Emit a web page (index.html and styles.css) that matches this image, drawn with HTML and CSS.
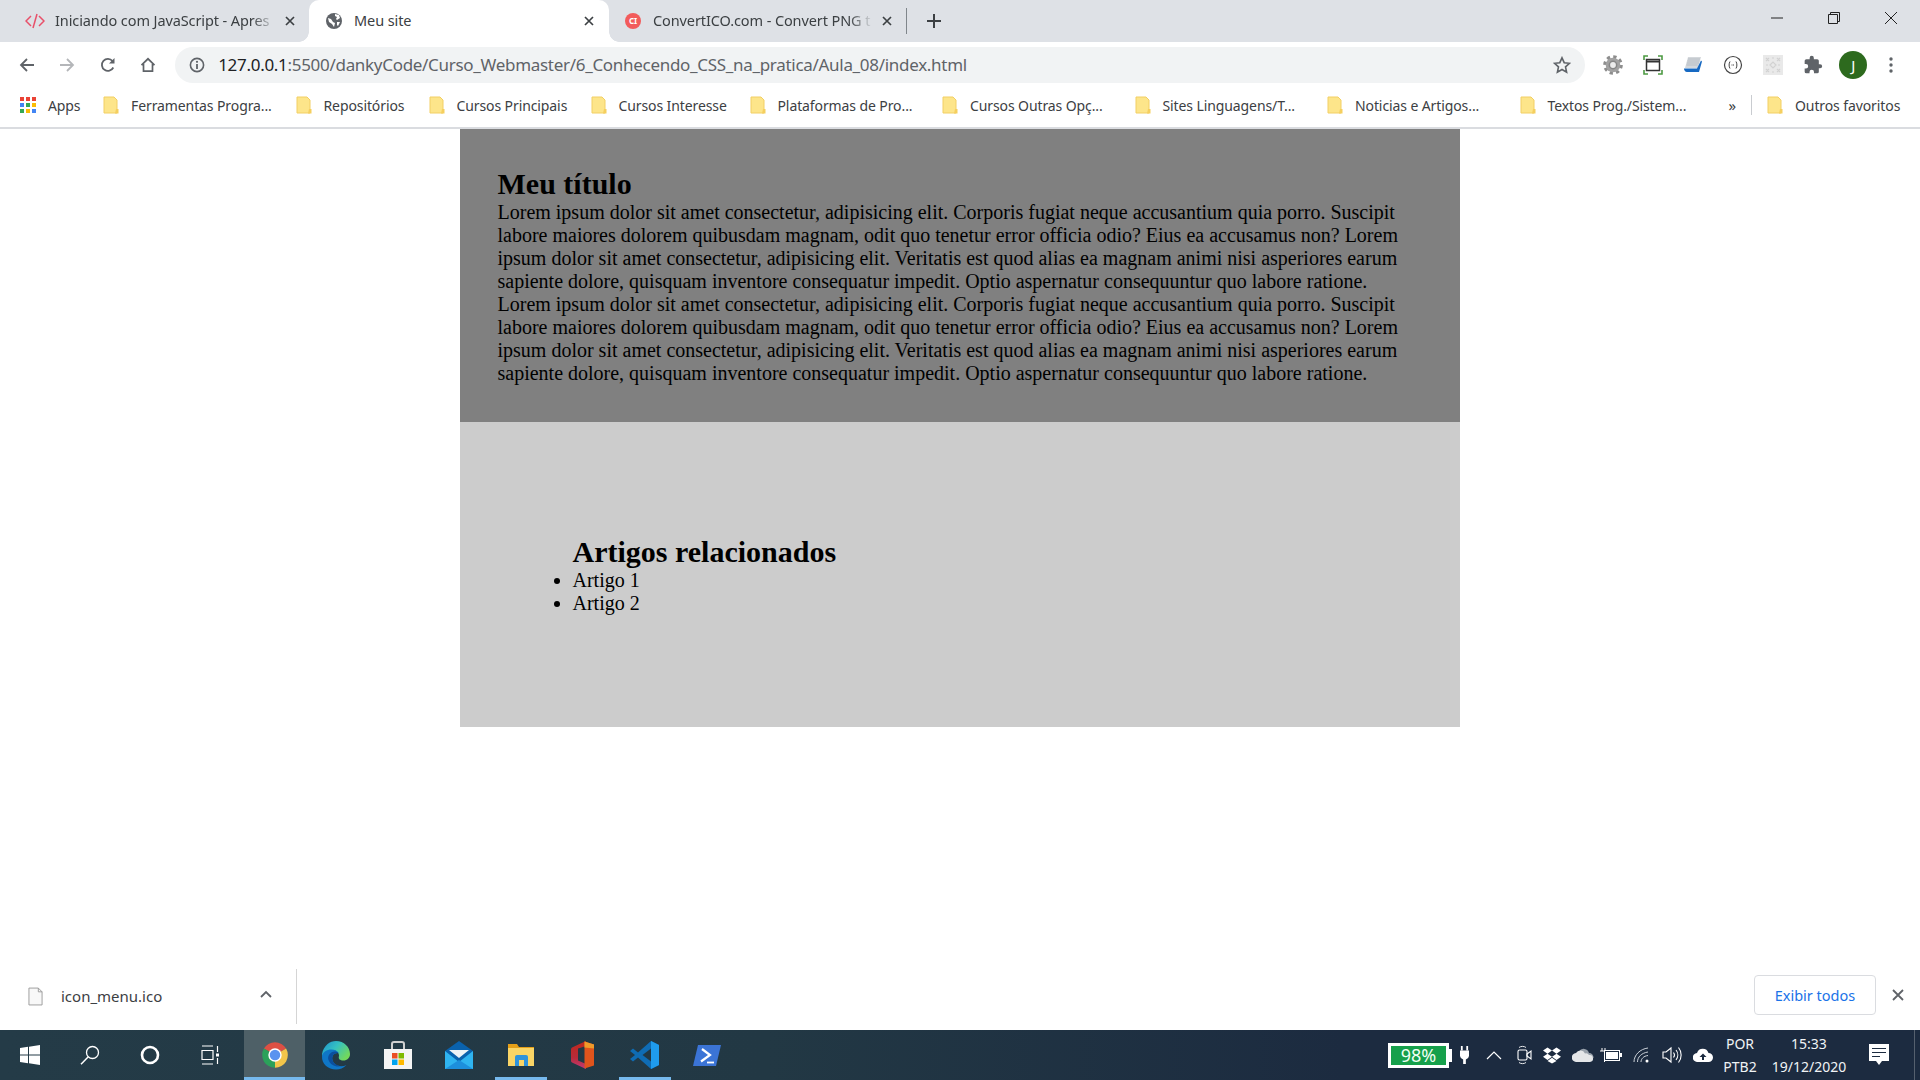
FILE: index.html
```html
<!DOCTYPE html>
<html lang="pt-BR">
<head>
<meta charset="utf-8">
<title>Meu site</title>
<link rel="stylesheet" href="styles.css">
</head>
<body>
<div class="tabstrip">
  <div class="tab tab-first">
    <svg class="fav" viewBox="0 0 20 16"><path d="M6 3 1 8l5 5M14 3l5 5-5 5" fill="none" stroke="#e8506a" stroke-width="1.5"/><path d="M12 1 8 15" fill="none" stroke="#e8506a" stroke-width="1.5"/></svg>
    <span class="tab-title">Iniciando com JavaScript - Apres</span>
    <svg class="tab-x" viewBox="0 0 10 10"><path d="M1 1l8 8M9 1l-8 8" stroke="#3c4043" stroke-width="1.7"/></svg>
  </div>
  <div class="tab tab-active">
    <svg class="fav" viewBox="0 0 16 16"><circle cx="8" cy="8" r="8" fill="#5f6368"/><path d="M2 5l3 1 2 3 2 1-1 4-2-3-3-2zM9 1l4 1 1 3-3 2-1-1 1-2-2-1zM11 9l3 0-2 4-1-1z" fill="#fff"/></svg>
    <span class="tab-title">Meu site</span>
    <svg class="tab-x" viewBox="0 0 10 10"><path d="M1 1l8 8M9 1l-8 8" stroke="#3c4043" stroke-width="1.7"/></svg>
  </div>
  <div class="tab tab-third">
    <span class="fav-ci">CI</span>
    <span class="tab-title">ConvertICO.com - Convert PNG t</span>
    <svg class="tab-x" viewBox="0 0 10 10"><path d="M1 1l8 8M9 1l-8 8" stroke="#3c4043" stroke-width="1.7"/></svg>
  </div>
  <div class="tab-sep"></div>
  <svg class="new-tab" viewBox="0 0 14 14"><path d="M7 0v14M0 7h14" stroke="#3c4043" stroke-width="2"/></svg>
  <div class="win-controls">
    <svg class="win-btn" viewBox="0 0 14 14"><path d="M1 7h12" stroke="#222" stroke-width="1"/></svg>
    <svg class="win-btn" viewBox="0 0 14 14"><path d="M1.500 3.500h9v9h-9zM3.500 3.500v-2h9v9h-2" fill="none" stroke="#222" stroke-width="1"/></svg>
    <svg class="win-btn" viewBox="0 0 14 14"><path d="M1 1l12 12M13 1L1 13" stroke="#222" stroke-width="1"/></svg>
  </div>
</div>

<div class="toolbar">
  <div class="nav-btn"><svg viewBox="0 0 16 16"><path d="M15 8H2M8 2 2 8l6 6" fill="none" stroke="#5f6368" stroke-width="1.800"/></svg></div>
  <div class="nav-btn"><svg viewBox="0 0 16 16"><path d="M1 8h13M8 2l6 6-6 6" fill="none" stroke="#b4b6b9" stroke-width="1.800"/></svg></div>
  <div class="nav-btn"><svg viewBox="0 0 16 16"><path d="M13.300 10.500A6 6 0 1 1 12.500 4" fill="none" stroke="#5f6368" stroke-width="1.800"/><path d="M14.500 1v5.500H9z" fill="#5f6368"/></svg></div>
  <div class="nav-btn"><svg viewBox="0 0 16 16"><path d="M1.500 8.200 8 1.800l6.500 6.400M3.500 7v7.200h9V7" fill="none" stroke="#5f6368" stroke-width="1.700"/></svg></div>
  <div class="omnibox">
    <svg class="info" viewBox="0 0 16 16"><circle cx="8" cy="8" r="6.600" fill="none" stroke="#5f6368" stroke-width="1.600"/><path d="M8 7v5" stroke="#5f6368" stroke-width="1.800"/><circle cx="8" cy="4.800" r="1.100" fill="#5f6368"/></svg>
    <span class="url"><span class="url-host">127.0.0.1</span>:5500/dankyCode/Curso_Webmaster/6_Conhecendo_CSS_na_pratica/Aula_08/index.html</span>
    <svg class="star" viewBox="0 0 18 18"><path d="M9 1.800l2.200 4.900 5.300.6-4 3.600 1.100 5.300L9 13.500l-4.600 2.700 1.100-5.300-4-3.600 5.300-.6z" fill="none" stroke="#5f6368" stroke-width="1.600"/></svg>
  </div>
  <div class="ext-row">
    <svg class="ext" viewBox="0 0 20 20"><circle cx="10" cy="10" r="8" fill="none" stroke="#8d8d8d" stroke-width="3.600" stroke-dasharray="3.200 3.080"/><circle cx="10" cy="10" r="7.300" fill="#a2a2a2"/><circle cx="10" cy="10" r="4.400" fill="#868686"/><circle cx="10" cy="10" r="2.900" fill="#ececec"/></svg>
    <svg class="ext" viewBox="0 0 20 20"><path d="M1 5V1h4M15 1h4v4M19 15v4h-4M5 19H1v-4" fill="none" stroke="#4d9a43" stroke-width="1.600"/><rect x="3.500" y="4.500" width="13" height="11" fill="none" stroke="#333" stroke-width="1.500"/><path d="M3.500 6.500h13" stroke="#333" stroke-width="2"/></svg>
    <svg class="ext" viewBox="0 0 20 20"><path d="M5 2h13l-3 11H2z" fill="#d4d8dc"/><path d="M5 4h12M4.500 6h12M4 8h12M3.500 10h11" stroke="#aeb4bb" stroke-width=".7"/><path d="M1 13.500h13l4-8 1 1-3 10.500H4c-2 0-3-2-3-3.500z" fill="#1769c2"/></svg>
    <svg class="ext" viewBox="0 0 20 20"><circle cx="10" cy="10" r="8.500" fill="#fff" stroke="#444" stroke-width="1.200"/><path d="M7 6.500C5.800 8.500 5.800 11.500 7 13.500M13 6.500c1.200 2 1.200 5 0 7" fill="none" stroke="#444" stroke-width="1"/><path d="M8.500 10h3" stroke="#444" stroke-width="1" stroke-dasharray="1 .5"/></svg>
    <svg class="ext" viewBox="0 0 20 20"><rect width="20" height="20" fill="#e9e9e9"/><path d="M3 3l3 3M6 3 3 6M14 3l3 3M17 3l-3 3M3 14l3 3M6 14l-3 3M14 14l3 3M17 14l-3 3M7 10l3-3 3 3-3 3zM3 10h2M15 10h2M9 3h2M9 17h2" fill="none" stroke="#d2d2d2" stroke-width="1.200"/></svg>
    <svg class="ext" viewBox="0 0 24 24"><path d="M20.500 11H19V7a2 2 0 0 0-2-2h-4V3.500a2.500 2.500 0 0 0-5 0V5H4a2 2 0 0 0-2 2v3.800h1.500a2.700 2.700 0 0 1 0 5.400H2V20a2 2 0 0 0 2 2h3.800v-1.500a2.700 2.700 0 0 1 5.400 0V22H17a2 2 0 0 0 2-2v-4h1.500a2.500 2.500 0 0 0 0-5z" fill="#5f6368"/></svg>
    <span class="avatar">J</span>
    <svg class="ext dots" viewBox="0 0 4 16"><circle cx="2" cy="2" r="1.700" fill="#5f6368"/><circle cx="2" cy="8" r="1.700" fill="#5f6368"/><circle cx="2" cy="14" r="1.700" fill="#5f6368"/></svg>
  </div>
</div>

<div class="bookmarks">
  <div class="bm bm-apps">
    <svg class="apps" viewBox="0 0 16 16"><rect x="0" y="0" width="4" height="4" fill="#ea4335"/><rect x="6" y="0" width="4" height="4" fill="#ea4335"/><rect x="12" y="0" width="4" height="4" fill="#ea4335"/><rect x="0" y="6" width="4" height="4" fill="#4285f4"/><rect x="6" y="6" width="4" height="4" fill="#34a853"/><rect x="12" y="6" width="4" height="4" fill="#fbbc04"/><rect x="0" y="12" width="4" height="4" fill="#34a853"/><rect x="6" y="12" width="4" height="4" fill="#fbbc04"/><rect x="12" y="12" width="4" height="4" fill="#4285f4"/></svg>
    <span>Apps</span>
  </div>
  <div class="bm bm-a"><svg class="folder" viewBox="0 0 16 18"><path d="M1 1h10l3 3v13H1z" fill="#fde58a" stroke="#f2cf64"/><path d="M13 13h2.500v4.500H12z" fill="#f5cf5f"/></svg><span>Ferramentas Progra...</span></div>
  <div class="bm bm-b"><svg class="folder" viewBox="0 0 16 18"><path d="M1 1h10l3 3v13H1z" fill="#fde58a" stroke="#f2cf64"/><path d="M13 13h2.500v4.500H12z" fill="#f5cf5f"/></svg><span>Repositórios</span></div>
  <div class="bm bm-c"><svg class="folder" viewBox="0 0 16 18"><path d="M1 1h10l3 3v13H1z" fill="#fde58a" stroke="#f2cf64"/><path d="M13 13h2.500v4.500H12z" fill="#f5cf5f"/></svg><span>Cursos Principais</span></div>
  <div class="bm bm-d"><svg class="folder" viewBox="0 0 16 18"><path d="M1 1h10l3 3v13H1z" fill="#fde58a" stroke="#f2cf64"/><path d="M13 13h2.500v4.500H12z" fill="#f5cf5f"/></svg><span>Cursos Interesse</span></div>
  <div class="bm bm-a"><svg class="folder" viewBox="0 0 16 18"><path d="M1 1h10l3 3v13H1z" fill="#fde58a" stroke="#f2cf64"/><path d="M13 13h2.500v4.500H12z" fill="#f5cf5f"/></svg><span>Plataformas de Pro...</span></div>
  <div class="bm bm-a"><svg class="folder" viewBox="0 0 16 18"><path d="M1 1h10l3 3v13H1z" fill="#fde58a" stroke="#f2cf64"/><path d="M13 13h2.500v4.500H12z" fill="#f5cf5f"/></svg><span>Cursos Outras Opç...</span></div>
  <div class="bm bm-a"><svg class="folder" viewBox="0 0 16 18"><path d="M1 1h10l3 3v13H1z" fill="#fde58a" stroke="#f2cf64"/><path d="M13 13h2.500v4.500H12z" fill="#f5cf5f"/></svg><span>Sites Linguagens/T...</span></div>
  <div class="bm bm-a"><svg class="folder" viewBox="0 0 16 18"><path d="M1 1h10l3 3v13H1z" fill="#fde58a" stroke="#f2cf64"/><path d="M13 13h2.500v4.500H12z" fill="#f5cf5f"/></svg><span>Noticias e Artigos...</span></div>
  <div class="bm bm-e"><svg class="folder" viewBox="0 0 16 18"><path d="M1 1h10l3 3v13H1z" fill="#fde58a" stroke="#f2cf64"/><path d="M13 13h2.500v4.500H12z" fill="#f5cf5f"/></svg><span>Textos Prog./Sistem...</span></div>
  <span class="bm-more">»</span>
  <div class="bm-sep"></div>
  <div class="bm"><svg class="folder" viewBox="0 0 16 18"><path d="M1 1h10l3 3v13H1z" fill="#fde58a" stroke="#f2cf64"/><path d="M13 13h2.500v4.500H12z" fill="#f5cf5f"/></svg><span>Outros favoritos</span></div>
</div>

<main class="viewport">
  <div class="site">
    <section class="content">
      <h2>Meu título</h2>
      <p>Lorem ipsum dolor sit amet consectetur, adipisicing elit. Corporis fugiat neque accusantium quia porro. Suscipit labore maiores dolorem quibusdam magnam, odit quo tenetur error officia odio? Eius ea accusamus non? Lorem ipsum dolor sit amet consectetur, adipisicing elit. Veritatis est quod alias ea magnam animi nisi asperiores earum sapiente dolore, quisquam inventore consequatur impedit. Optio aspernatur consequuntur quo labore ratione.</p>
      <p>Lorem ipsum dolor sit amet consectetur, adipisicing elit. Corporis fugiat neque accusantium quia porro. Suscipit labore maiores dolorem quibusdam magnam, odit quo tenetur error officia odio? Eius ea accusamus non? Lorem ipsum dolor sit amet consectetur, adipisicing elit. Veritatis est quod alias ea magnam animi nisi asperiores earum sapiente dolore, quisquam inventore consequatur impedit. Optio aspernatur consequuntur quo labore ratione.</p>
    </section>
    <aside class="related">
      <h2>Artigos relacionados</h2>
      <ul>
        <li>Artigo 1</li>
        <li>Artigo 2</li>
      </ul>
    </aside>
  </div>
</main>

<div class="downloads">
  <div class="dl-item">
    <svg class="dl-file" viewBox="0 0 16 20"><path d="M1 1h10l4 4v14H1z" fill="#f8f8f8" stroke="#9a9a9a"/><path d="M11 1v4h4" fill="none" stroke="#9a9a9a"/></svg>
    <span class="dl-name">icon_menu.ico</span>
    <svg class="dl-chev" viewBox="0 0 12 8"><path d="M1 7l5-5 5 5" fill="none" stroke="#5f6368" stroke-width="1.800"/></svg>
  </div>
  <div class="dl-spacer"></div>
  <button class="dl-all">Exibir todos</button>
  <svg class="dl-close" viewBox="0 0 12 12"><path d="M1 1l10 10M11 1L1 11" stroke="#5f6368" stroke-width="1.800"/></svg>
</div>

<footer class="taskbar">
  <div class="tb-cell tb-sys"><svg class="tb-i20" viewBox="0 0 20 20"><path d="M0 3l8-1.200V9.500H0zM9 1.700 20 0v9.500H9zM0 10.500h8v7.700L0 17zM9 10.500h11V20L9 18.300z" fill="#fff"/></svg></div>
  <div class="tb-cell tb-sys"><svg class="tb-i20" viewBox="0 0 20 20"><circle cx="12.500" cy="7.500" r="6" fill="none" stroke="#fff" stroke-width="1.300"/><path d="M8.300 11.800 1 19.200" stroke="#fff" stroke-width="1.500"/></svg></div>
  <div class="tb-cell tb-sys"><svg class="tb-i20" viewBox="0 0 20 20"><circle cx="10" cy="10" r="8" fill="none" stroke="#fff" stroke-width="2.600"/></svg></div>
  <div class="tb-cell tb-sys"><svg class="tb-i20" viewBox="0 0 20 20"><path d="M2 1h11M2 19h11M2 5.500h11v9H2z" fill="none" stroke="#fff" stroke-width="1.200"/><path d="M17.500 1v6M17.500 13v6" stroke="#fff" stroke-width="1.200"/><rect x="16" y="8.500" width="3" height="3" fill="#fff"/></svg></div>
  <div class="tb-cell tb-app tb-chrome"><svg class="tb-i28" viewBox="0 0 48 48"><path d="M24 24 4.950 13A22 22 0 0 1 43.050 13z" fill="#dd5044"/><path d="M24 24 43.050 13A22 22 0 0 1 24 46z" fill="#f3c54a"/><path d="M24 24V46A22 22 0 0 1 4.950 13z" fill="#2ba15a"/><circle cx="24" cy="24" r="11.500" fill="#fff"/><circle cx="24" cy="24" r="9" fill="#5b93ef"/></svg></div>
  <div class="tb-cell tb-app"><svg class="tb-i30" viewBox="0 0 30 30"><defs><linearGradient id="edgeA" x1="0" y1="0" x2="1" y2=".6"><stop offset="0" stop-color="#1c8fd0"/><stop offset=".5" stop-color="#35c1c1"/><stop offset="1" stop-color="#72d85c"/></linearGradient></defs><path d="M1 14C2.500 5.500 9 1 15 1c8 0 14 6 14 13 0 4-3 6.500-6.500 6.500-3.500 0-5.500-1.500-4.500-4.500.5-3-3-6-7-6-5 0-8.500 3-9.500 7z" fill="url(#edgeA)"/><path d="M1 16C2 12 5.500 9.500 10.500 9.500c3.500 0 6 1.500 7 3.500-4.500-.5-7 3-6 7 1 5 8 8 14 5-3 3-6.500 4.500-10.500 4.500C7 29.500.500 24 1 16z" fill="#0f76c6"/><path d="M17.500 13c-4.500-.5-7 3-6 7 .8 3.500 4.500 6 9 6-5 1.500-11-.5-13-6-1.500-4 2-8.500 6-8.500 1.600 0 3 .5 4 1.500z" fill="#0b4f9e"/></svg></div>
  <div class="tb-cell tb-app"><svg class="tb-i30" viewBox="0 0 30 30"><path d="M9 9V4a2 2 0 0 1 2-2h8a2 2 0 0 1 2 2v5" fill="none" stroke="#d0d0d0" stroke-width="2"/><rect x="1" y="9" width="28" height="20" fill="#f4f4f4"/><rect x="9" y="13" width="5.500" height="5.500" fill="#ea4e24"/><rect x="15.500" y="13" width="5.500" height="5.500" fill="#7fba00"/><rect x="9" y="19.500" width="5.500" height="5.500" fill="#00a4ef"/><rect x="15.500" y="19.500" width="5.500" height="5.500" fill="#ffb900"/></svg></div>
  <div class="tb-cell tb-app"><svg class="tb-i30" viewBox="0 0 30 30"><path d="M15 1 29 11v18H1V11z" fill="#0a62ad"/><path d="M1 11l14 11 14-11v18H1z" fill="#2fb4f0"/><path d="M1 29l14-9 14 9z" fill="#1d8fdc"/><path d="M5 10h20L15 18z" fill="#eef3f6"/></svg></div>
  <div class="tb-cell tb-app tb-open"><svg class="tb-fold" viewBox="0 0 28 24"><path d="M1 1h9l2 3h15v19H1z" fill="#e59f18"/><path d="M1 5h26v18H1z" fill="#fad566"/><path d="M8 23v-9a2 2 0 0 1 2-2h9a2 2 0 0 1 2 2v9h-4v-6h-5v6z" fill="#2f93dc"/></svg></div>
  <div class="tb-cell tb-app"><svg class="tb-i30" viewBox="0 0 30 30"><defs><linearGradient id="officeA" x1="0" y1="0" x2="0" y2="1"><stop offset="0" stop-color="#c0281c"/><stop offset=".6" stop-color="#b82b3a"/><stop offset="1" stop-color="#c43a78"/></linearGradient></defs><path d="M4 7.500 18 1v5l-8 2.500v12L18 24v5L4 22.500C3 22 3 21 3 20V10c0-1 .3-2 1-2.500z" fill="url(#officeA)"/><path d="M16.500 1.500 26 4.500v21l-9.500 3z" fill="#e0541c"/><path d="M16.500 1.500 26 4.500v4l-9.500-1z" fill="#f09a2a"/></svg></div>
  <div class="tb-cell tb-app tb-open"><svg class="tb-i30" viewBox="0 0 30 30"><path d="M21 1 29 5v20l-8 4L8 17.500 3 21.500 0 19l5-4-5-4 3-2.500 5 4z" fill="#0f6cb4"/><path d="M21 8.500v13L12.500 15z" fill="#223844"/><path d="M21 1l8 4v20l-8 4z" fill="#1f9cee"/></svg></div>
  <div class="tb-cell tb-app"><svg class="tb-ps" viewBox="0 0 28 21"><path d="M5 0h23l-5 21H0z" fill="#3b74d6"/><path d="M9 4l8 6-9 6.500" fill="none" stroke="#fff" stroke-width="2.200"/><path d="M14 17.500h7" stroke="#fff" stroke-width="1.800"/></svg></div>

  <div class="tray">
    <div class="batt-box"><span class="batt-fill">98%</span></div>
    <svg class="tr tr-plug" viewBox="0 0 12 20"><path d="M3 0v5M9 0v5" stroke="#fff" stroke-width="2"/><path d="M1 5h10v6a5 5 0 0 1-3.500 4v5h-3v-5A5 5 0 0 1 1 11z" fill="#fff"/></svg>
    <svg class="tr tr-chev" viewBox="0 0 16 10"><path d="M1 9l7-7 7 7" fill="none" stroke="#fff" stroke-width="1.200"/></svg>
    <svg class="tr tr-meet" viewBox="0 0 16 20"><rect x="1" y="5" width="9" height="10" rx="1.500" fill="none" stroke="#fff" stroke-width="1.100"/><path d="M10 9l4-3v8l-4-3z" fill="none" stroke="#fff" stroke-width="1.100"/><path d="M2 2.500C4 1 7 1 9 2.500M2 17.500c2 1.500 5 1.500 7 0" fill="none" stroke="#fff" stroke-width=".9"/></svg>
    <svg class="tr tr-drop" viewBox="0 0 20 18"><path d="M5 0 0 3.500 5 7l5-3.500zM15 0l-5 3.500L15 7l5-3.500zM0 10.500 5 14l5-3.500L5 7zM15 7l-5 3.500 5 3.500 5-3.500zM5 15l5 3 5-3-5-3.500z" fill="#fff"/></svg>
    <svg class="tr tr-one" viewBox="0 0 22 14"><path d="M7 3.500a5.500 5.500 0 0 1 10 1.500 4.500 4.500 0 0 1 4.500 5L11 6.500C10 5 8.500 4 7 3.500z" fill="#98a1ab"/><path d="M4.500 14a4.500 4.500 0 0 1-.5-9 5 5 0 0 1 9 .5 3.500 3.500 0 0 1 4 1.500A3.500 3.500 0 0 1 18 14z" fill="#e4e6e8"/></svg>
    <svg class="tr tr-batt" viewBox="0 0 22 14"><path d="M2 0v3M5 0v3M0 3h7v3L4.500 8v6" fill="none" stroke="#fff" stroke-width="1"/><rect x="4.500" y="2.500" width="15" height="10" fill="#1c2b40" stroke="#fff"/><rect x="6" y="4" width="12" height="7" fill="#fff"/><rect x="20" y="5" width="2" height="4" fill="#fff"/></svg>
    <svg class="tr tr-wifi" viewBox="0 0 16 16"><path d="M1 15C1 8 7 2 15 1M4.500 15c0-5 4-9 10.500-10M8 15c0-3 2.500-6 7-6.500" fill="none" stroke="#ccd2d9" stroke-width="1"/><circle cx="14" cy="14" r="1.500" fill="#fff"/></svg>
    <svg class="tr tr-sound" viewBox="0 0 20 18"><path d="M1 6h3l5-4v14l-5-4H1z" fill="none" stroke="#fff" stroke-width="1.100"/><path d="M11.500 6.500a4 4 0 0 1 0 5M14 4a8 8 0 0 1 0 10M16.500 1.500a12 12 0 0 1 0 15" fill="none" stroke="#fff" stroke-width="1.100"/></svg>
    <svg class="tr tr-cloud" viewBox="0 0 20 14"><path d="M4.500 14a4.500 4.500 0 0 1-.5-9 6 6 0 0 1 11.500 0 4.500 4.500 0 0 1 0 9z" fill="#fff"/><path d="M10 5.500l3.500 3.500H11v3H9V9H6.500z" fill="#1c2b40"/></svg>
    <div class="lang"><span>POR</span><span>PTB2</span></div>
    <div class="clock"><span>15:33</span><span>19/12/2020</span></div>
    <svg class="tr tr-note" viewBox="0 0 20 22"><path d="M0 0h20v17h-7l-3 4-3-4H0z" fill="#fff"/><path d="M3 4.500h14M3 8.500h14M3 12.500h8" stroke="#1c2b40" stroke-width="1.200"/></svg>
    <div class="show-desktop"></div>
  </div>
</footer>
</body>
</html>
```

FILE: styles.css
```css
* { box-sizing: border-box; }
html, body { margin: 0; height: 100%; }
body {
  height: 100vh;
  display: flex;
  flex-direction: column;
  overflow: hidden;
  background: #fff;
  font-family: "Noto Sans", "Open Sans", sans-serif;
}
svg { display: block; flex: none; }

/* tab strip */
.tabstrip {
  flex: none;
  height: 42px;
  background: #dee1e6;
  display: flex;
  align-items: center;
  padding-left: 12px;
}
.tab {
  position: relative;
  width: 297px;
  height: 42px;
  display: flex;
  align-items: center;
  font-size: 14.500px;
  letter-spacing: -.1px;
  color: #3c4043;
}
.tab-first { padding-left: 13px; }
.tab-active {
  width: 300px;
  background: #fff;
  border-radius: 10px 10px 0 0;
  padding-left: 17px;
}
.tab-active::before, .tab-active::after {
  content: "";
  position: absolute;
  bottom: 0;
  width: 10px;
  height: 10px;
  background: radial-gradient(circle at 0 0, #dee1e6 9.500px, #fff 10px);
}
.tab-active::before { left: -10px; }
.tab-active::after { right: -10px; background: radial-gradient(circle at 100% 0, #dee1e6 9.500px, #fff 10px); }
.tab-third { padding-left: 16px; width: 297px; }
.fav { width: 20px; height: 16px; margin-right: 10px; }
.tab-active .fav { width: 16px; margin-right: 12px; }
.fav-ci {
  flex: none;
  width: 16px;
  height: 16px;
  border-radius: 50%;
  margin-right: 12px;
  background: #f25b5b;
  color: #fff;
  font-size: 8px;
  line-height: 16px;
  text-align: center;
  font-weight: 700;
}
.tab-title {
  flex: 1;
  min-width: 0;
  margin-top: -2px;
  white-space: nowrap;
  overflow: hidden;
  -webkit-mask-image: linear-gradient(90deg, #000 calc(100% - 24px), transparent);
  mask-image: linear-gradient(90deg, #000 calc(100% - 24px), transparent);
}
.tab-first .tab-title { margin-right: 9px; }
.tab-active .tab-title { -webkit-mask-image: none; mask-image: none; }
.tab-third .tab-title { margin-right: 9px; }
.tab-x { width: 10px; height: 10px; margin-right: 14px; }
.tab-active .tab-x { margin-right: 15px; }
.tab-sep { width: 1px; height: 26px; background: #80868b; }
.new-tab { width: 14px; height: 14px; margin-left: 20px; }
.win-controls { margin-left: auto; display: flex; gap: 43px; padding-right: 22px; margin-top: -6px; }
.win-btn { width: 14px; height: 14px; }

/* toolbar */
.toolbar {
  flex: none;
  height: 42px;
  display: flex;
  align-items: center;
  padding-left: 19px;
  padding-top: 3px;
}
.nav-btn { width: 40.300px; display: flex; }
.nav-btn svg { width: 16px; height: 16px; }
.omnibox {
  width: 1410px;
  height: 36px;
  border-radius: 18px;
  background: #f1f3f4;
  display: flex;
  align-items: center;
  margin-left: -5px;
  padding-left: 14px;
  padding-right: 14px;
}
.info { width: 16px; height: 16px; margin-right: 13px; }
.url { flex: 1; font-size: 17px; color: #5f6368; white-space: nowrap; letter-spacing: -.3px; }
.url-host { color: #202124; }
.star { width: 18px; height: 18px; }
.ext-row { display: flex; align-items: center; margin-left: 18px; }
.ext { width: 20px; height: 20px; margin-right: 20px; }
.dots { width: 4px; height: 16px; margin: 0 0 0 22px; }
.avatar {
  flex: none;
  width: 28px;
  height: 28px;
  border-radius: 50%;
  background: #2d6a1e;
  color: #fff;
  font-size: 15px;
  line-height: 28px;
  text-align: center;
  margin-left: -4px;
}

/* bookmarks */
.bookmarks {
  flex: none;
  height: 45px;
  border-bottom: 2px solid #dadce0;
  display: flex;
  align-items: center;
  padding: 0 0 1px 20px;
  font-size: 14px;
  letter-spacing: -.1px;
  color: #3c4043;
}
.bm { flex: none; display: flex; align-items: center; white-space: nowrap; }
.bm-apps { width: 83px; }
.bm-a { width: 192.500px; }
.bm-b { width: 133px; }
.bm-c { width: 162px; }
.bm-d { width: 159px; }
.bm-e { width: 209px; }
.apps { width: 16px; height: 16px; margin-right: 12px; }
.folder { width: 16px; height: 18px; margin-right: 12px; }
.bm-more { width: 22.500px; font-size: 15px; line-height: 16px; }
.bm-sep { width: 1px; height: 20px; background: #c9ccd0; margin: 0 15px 0 0; }

/* page */
.viewport { flex: 1; min-height: 0; background: #fff; }
.site {
  width: 1000px;
  margin: 0 auto;
  font-family: "Liberation Serif", "Times New Roman", serif;
  font-size: 20px;
  color: #000;
}
.site h2 { margin: 0; font-size: 30px; line-height: 34px; font-weight: 700; }
.site p { margin: 0; }
.content { background: #808080; padding: 38px 37.500px 37px 37.500px; }
.related { background: #ccc; padding: 112.500px; }
.related ul { margin: 0; padding: 0; }

/* downloads */
.downloads {
  flex: none;
  height: 68px;
  display: flex;
  align-items: center;
  padding: 0 0 0 28px;
}
.dl-item {
  width: 269px;
  height: 55px;
  display: flex;
  align-items: center;
  border-right: 1px solid #d5d5d5;
}
.dl-file { width: 15px; height: 19px; margin-right: 18px; }
.dl-name { font-size: 15px; color: #3c4043; width: 199px; }
.dl-chev { width: 12px; height: 8px; margin-top: -4px; }
.dl-spacer { flex: 1; }
.dl-all {
  width: 122px;
  height: 40px;
  margin-top: -2px;
  border: 1px solid #dadce0;
  border-radius: 4px;
  background: #fff;
  color: #1a73e8;
  font: 14.500px "Noto Sans", sans-serif;
  padding: 0;
}
.dl-close { width: 12px; height: 12px; margin: -2px 16px 0 16px; }

/* taskbar */
.taskbar {
  flex: none;
  height: 50px;
  background: linear-gradient(90deg, #243b47, #223844 40%, #1c2b40 70%, #1c2b40);
  display: flex;
  align-items: stretch;
  color: #fff;
}
.tb-cell { flex: none; display: flex; align-items: center; justify-content: center; }
.tb-sys { width: 60px; }
.tb-app { width: 61.800px; }
.tb-chrome { background: #4e6067; box-shadow: inset 0 -3px 0 #76b9ed; margin-left: 4px; width: 61px; }
.tb-open { box-shadow: inset 0 -3px 0 #76b9ed; margin: 0 5px; width: 51.800px; }
.tb-i20 { width: 20px; height: 20px; }
.tb-i28 { width: 28px; height: 28px; }
.tb-i30 { width: 30px; height: 30px; }
.tb-fold { width: 28px; height: 24px; }
.tb-ps { width: 28px; height: 21px; }
.tray { margin-left: auto; display: flex; align-items: center; }
.batt-box {
  position: relative;
  width: 61px;
  height: 25px;
  border: 3px solid #fff;
  background: #16a04b;
  text-align: center;
  font-size: 18px;
  line-height: 19px;
  color: #f1fff4;
  margin-right: 10px;
}
.batt-box::after {
  content: "";
  position: absolute;
  right: -6px;
  top: 3px;
  width: 3px;
  height: 13px;
  background: #fff;
}
.batt-fill { display: block; }
.tr { margin-right: 12px; }
.tr-plug { width: 11px; height: 18px; margin-right: 16px; }
.tr-chev { width: 16px; height: 10px; margin-right: 15px; }
.tr-meet { width: 16px; height: 20px; margin-right: 10px; }
.tr-drop { width: 18px; height: 17px; margin-right: 11px; }
.tr-one { width: 22px; height: 14px; margin-right: 6px; }
.tr-batt { width: 22px; height: 14px; margin-right: 11px; }
.tr-wifi { width: 16px; height: 16px; margin-right: 13px; }
.tr-sound { width: 20px; height: 18px; margin-right: 11px; }
.tr-cloud { width: 20px; height: 14px; margin-right: 2px; }
.lang, .clock {
  display: flex;
  flex-direction: column;
  align-items: center;
  font-size: 14px;
  line-height: 23px;
  color: #f0f3f5;
}
.lang { width: 50px; }
.clock { width: 76px; margin-left: 6px; }
.tr-note { width: 20px; height: 22px; margin: 0 25px 0 22px; }
.show-desktop { width: 1px; height: 50px; background: #55606e; margin-right: 5px; }
```
